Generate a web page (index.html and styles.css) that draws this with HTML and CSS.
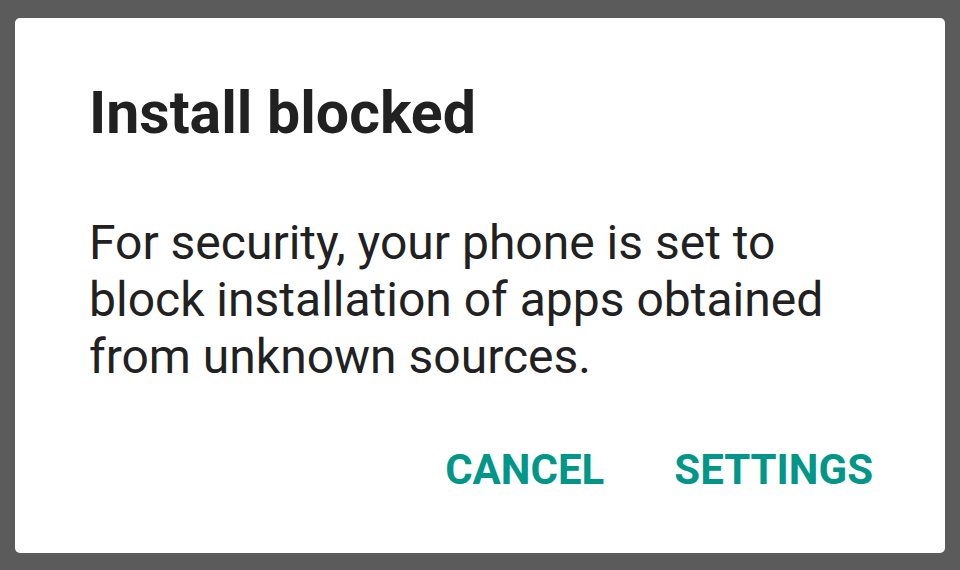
FILE: index.html
```html
<!DOCTYPE html>
<html lang="en">
<head>
  <meta charset="UTF-8">
  <meta name="viewport" content="width=device-width, initial-scale=1.0">
  <title>Install blocked</title>
  <link rel="stylesheet" href="styles.css">
</head>
<body>
  <div class="dialog">
    <h1 class="dialog-title">Install blocked</h1>
    <p class="dialog-body">For security, your phone is set to block installation of apps obtained from unknown sources.</p>
    <div class="dialog-actions">
      <button class="btn">CANCEL</button>
      <button class="btn">SETTINGS</button>
    </div>
  </div>
</body>
</html>
```

FILE: styles.css
```css
:root {
  --scrim: #5b5b5b;
  --surface: #fff;
  --text: #212121;
  --accent: #009688;
}
*, *::before, *::after {
  box-sizing: border-box;
}
html, body {
  margin: 0;
  padding: 0;
  height: 100%;
}
body {
  font-family: Roboto, "Noto Sans", "Liberation Sans", sans-serif;
  background: var(--scrim);
  color: var(--text);
  padding: 18px 15px 17px;
}
.dialog {
  background: var(--surface);
  border-radius: 5px;
  height: 535px;
  padding: 65px 40px 0 74px;
}
.dialog-title {
  margin: 0;
  font-size: 59px;
  font-weight: 700;
  line-height: 60px;
}
.dialog-body {
  margin: 71px 0 0;
  font-size: 48px;
  line-height: 57px;
  width: 745px;
}
.dialog-actions {
  display: flex;
  justify-content: flex-end;
  gap: 70px;
  margin-top: 60px;
  padding-right: 32px;
}
.btn {
  font-family: inherit;
  background: none;
  border: 0;
  padding: 0;
  color: var(--accent);
  font-size: 42px;
  font-weight: 700;
  line-height: 50px;
}
```
